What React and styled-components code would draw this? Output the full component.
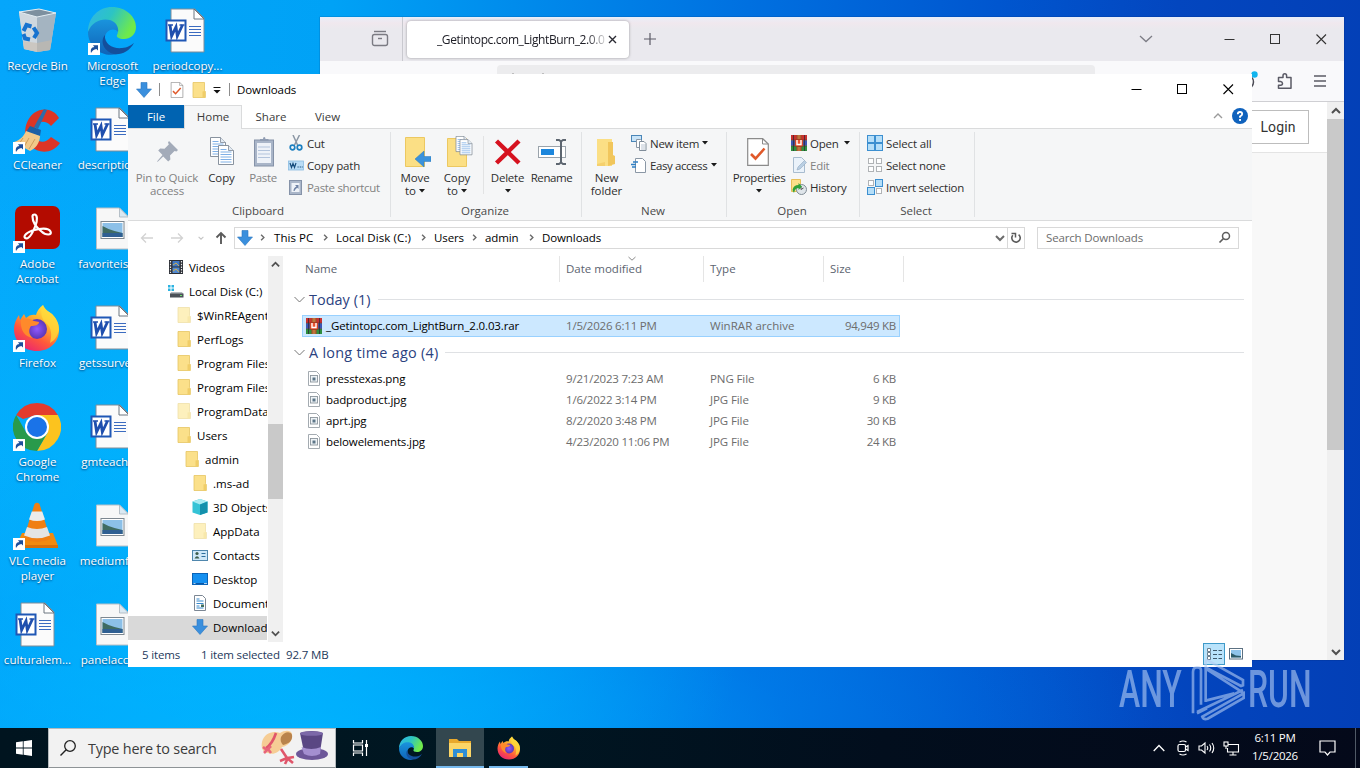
import React from "react";
import styled, { createGlobalStyle } from "styled-components";

const ui = `"Open Sans", "Noto Sans", sans-serif`;

const Global = createGlobalStyle`
  * { box-sizing: border-box; }
  body { margin: 0; overflow: hidden; font-family: ${ui}; font-size: 11.5px; color: #000; }
  svg { display: block; flex: none; }
`;

const Screen = styled.div`
  position: relative;
  width: 1360px;
  height: 768px;
  overflow: hidden;
  display: flex;
  flex-direction: column;
  background:
    radial-gradient(ellipse 520px 500px at 230px 560px, rgba(0, 186, 255, 0.75), rgba(0, 180, 255, 0) 100%),
    radial-gradient(ellipse 900px 300px at 300px 740px, rgba(0, 172, 255, 0.85), rgba(0, 140, 245, 0.4) 55%, rgba(0, 110, 230, 0) 100%),
    linear-gradient(92deg, #05a6fb 0%, #00a2f6 24%, #008cec 37%, #0070e0 54%, #0056cf 72%, #0346bf 85%, #033fb6 100%);
`;

const T = styled.span`
  white-space: nowrap;
  letter-spacing: ${(p) => p.$ls || 0}px;
`;

/* ---------- Desktop ---------- */
const Desktop = styled.div`
  flex: 1;
  min-height: 0;
  display: grid;
  grid-auto-flow: column;
  grid-template-rows: repeat(7, 99px);
  grid-auto-columns: 75px;
  padding-top: 7px;
  margin-left: -1px;
`;
const DeskItem = styled.div`
  display: flex;
  flex-direction: column;
  align-items: center;
`;
const DeskLabel = styled.div`
  margin-top: 3px;
  padding-left: 2px;
  white-space: pre;
  text-align: center;
  color: #fff;
  font-size: 11.6px;
  line-height: 15px;
  text-shadow: 0 1px 2px rgba(0, 30, 80, 0.8);
`;

const Shortcut = () => (
  <g>
    <rect x="0" y="36" width="12" height="12" fill="#fff" />
    <path d="M3 46c-.6-3.600.3-5.600 3.400-6l-1.500-1.800H10v5.200l-1.600-1.500C5.800 42.300 4.300 43.500 3 46z" fill="#1d4f9c" />
  </g>
);
const D = ({ children }) => (
  <svg width="48" height="48" viewBox="0 0 48 48">{children}</svg>
);
const RecycleIcon = () => (
  <D>
    <path d="M6 5l20-3 17 4-6 37-13 2-13-3z" fill="#b9c9d6" />
    <path d="M6 5l18 5 1 35-14-3z" fill="#cfd8df" />
    <path d="M24 10l19-4-6 37-13 2z" fill="#a4b4c1" />
    <path d="M6 5l20-3 17 4-19 4z" fill="#7d909f" stroke="#e3edf3" strokeWidth="1" />
    <path d="M10 34l14 2 15-3-2 10-13 2-13-3z" fill="#c9b9a8" opacity=".55" />
    <g fill="none" stroke="#1773cf" strokeWidth="4">
      <path d="M10.500 24l3-6 5 1.500" /><path d="M20.500 20.500l3.500 5.500-3 5" /><path d="M17 32.500l-5-1-1.500-4.500" />
    </g>
  </D>
);
const EdgeArt = ({ size }) => (
  <svg width={size} height={size} viewBox="0 0 48 48">
    <defs>
      <linearGradient id="eg1" x1="0" y1="0" x2="1" y2=".4"><stop offset="0" stopColor="#2fb4ea" /><stop offset=".5" stopColor="#2cc4c4" /><stop offset="1" stopColor="#6fea4b" /></linearGradient>
      <linearGradient id="eg2" x1="0" y1="0" x2="0" y2="1"><stop offset="0" stopColor="#1a94dd" /><stop offset="1" stopColor="#0f63b8" /></linearGradient>
    </defs>
    <path d="M0 25C0 10 11 0 24 0c14 0 24 10 24 20 0 8-6 12-12 12-5 0-8-2-7-4 2-3 1-9-5-11C15 14 5 16 0 25z" fill="url(#eg1)" />
    <path d="M0 25C4 14 14 11 22 13c6 2 9 7 8 12-4-5-12-2-13 5-1 8 5 15 12 17C14 51 0 40 0 25z" fill="url(#eg2)" />
    <path d="M17 28c-1 9 8 14 17 13 5 0 9-3 12-5-5 9-13 12-20 11-9-2-15-12-9-19z" fill="#144f9c" />
  </svg>
);
const EdgeIcon = () => (
  <D>
    <EdgeArt size={48} />
    <Shortcut />
  </D>
);
const WordIcon = () => (
  <D>
    <path d="M8 2h24l9 9v34H8z" fill="#fbfbfb" stroke="#7f8c99" strokeWidth="1" />
    <path d="M31 2v10h10z" fill="#fff" stroke="#6d7780" strokeWidth="1" />
    <path d="M26 19.500h12M26 22.500h12M26 25.500h12M26 28.500h12" stroke="#3b6bc0" />
    <rect x="3.500" y="13.500" width="19" height="20" fill="#fff" stroke="#1f57b5" strokeWidth="2" />
    <path d="M7 18l1.600 11L13 20l1.300 9L19.500 18" fill="none" stroke="#1f4fae" strokeWidth="2.800" />
    <path d="M5 18h5M16.500 18h5" stroke="#1f4fae" strokeWidth="1.500" />
  </D>
);
const PictureIcon = () => (
  <D>
    <g transform="translate(-1.500 0)">
      <path d="M10 3h23l9 9v32H10z" fill="#f7f7f7" stroke="#b8bfc6" strokeWidth="1" />
      <path d="M33 3v9h9z" fill="#dbe9f2" stroke="#a8b4bd" strokeWidth=".8" />
      <rect x="14.500" y="16.500" width="23" height="17" fill="#fff" stroke="#7d8790" />
      <rect x="16" y="18" width="20" height="14" fill="#8cc0e8" />
      <path d="M16 21l6 3 6 2 8 2v4H16z" fill="#3f6b62" />
      <rect x="16" y="28" width="20" height="4" fill="#2f5f92" />
    </g>
  </D>
);
const CCIcon = () => (
  <D>
    <path d="M46 12L38 20C32 13 22 15 21 25s10 15 17 6l9 6c-7 11-22 11-29 3C9 31 11 15 21 7c9-6 20-4 25 5z" fill="#dc3526" />
    <path d="M31 3l3 1-9 19-4-2z" fill="#2d6cab" />
    <path d="M17 20l11 4-1 6-14-4z" fill="#1b5fa5" />
    <path d="M13 25l14 5c0 7-5 13-10 15L1 36c6-2 10-6 12-11z" fill="#f1c98a" />
    <path d="M10 32l-4 6M16 32l-5 9M22 33l-6 10" stroke="#cf9d5c" strokeWidth="1" />
    <Shortcut />
  </D>
);
const AcrobatIcon = () => (
  <D>
    <rect x="2" y="1" width="45" height="43" rx="7" fill="#b30b00" />
    <path transform="translate(4 1.500)" fill="none" stroke="#fff" strokeWidth="2.200" strokeLinejoin="round" d="M17.500 8c3 0 3 6 1 11-2 6-6 13-9 13-4-1-2-5 6-8 7-2 16-3 18 1 2 4-5 4-9 0-5-4-9-10-9-15 0-1 1-2 2-2z" />
    <Shortcut />
  </D>
);
const FirefoxArt = ({ size }) => (
  <svg width={size} height={size} viewBox="0 0 48 48">
    <defs>
      <linearGradient id="fx1" x1=".8" y1="0" x2=".2" y2="1"><stop offset="0" stopColor="#fff04a" /><stop offset=".35" stopColor="#ffb02e" /><stop offset=".65" stopColor="#ff5a3a" /><stop offset="1" stopColor="#e81e78" /></linearGradient>
      <radialGradient id="fx2"><stop offset="0" stopColor="#9059ff" /><stop offset="1" stopColor="#5b36b5" /></radialGradient>
    </defs>
    <path d="M30 1c2 5 5 6 9 9 5 5 7 10 7 16 0 12-9 21-22 21S1 38 1 25c0-5 2-10 5-14l1 5 4-6 2 4c3-3 7-4 10-3 1-4 3-7 7-10z" fill="url(#fx1)" />
    <circle cx="24" cy="25" r="10" fill="url(#fx2)" />
    <path d="M8 16c5-3 9-1 13 1l5 1c0 3-4 4-8 4-3 4-2 9 2 12-9-1-13-9-12-18z" fill="#ff8a2b" />
    <path d="M30 1c2 5 5 6 9 9 5 5 7 10 7 16-2 7-4 10-9 13 2-8 2-15-4-20-5-4-6-12-3-18z" fill="#ffd93b" opacity=".75" />
  </svg>
);
const FirefoxIcon = () => (
  <D>
    <FirefoxArt size={48} />
    <Shortcut />
  </D>
);
const ChromeIcon = () => (
  <D>
    <path d="M24 0a24 24 0 0 1 20.800 12H24L10 16 3.200 12A24 24 0 0 1 24 0z" fill="#e33b2e" />
    <path d="M44.800 12A24 24 0 0 1 24 48l10.400-18L35 20l-11-8z" fill="#fcc31e" />
    <path d="M3.200 12A24 24 0 0 0 24 48l10.400-18-9 4-12-4z" fill="#299a4b" />
    <circle cx="24" cy="24" r="12" fill="#fff" />
    <circle cx="24" cy="24" r="10" fill="#1a73e8" />
    <Shortcut />
  </D>
);
const VlcIcon = () => (
  <D>
    <path d="M9 31h31l5 13H3z" fill="#f18a10" />
    <path d="M3 43h42v3H3z" fill="#d8700a" />
    <path d="M21.500 2q2.500-2.500 5 0l11 35q-13 6-27 0z" fill="#f07f13" />
    <path d="M18.800 9.500h10.400l2.800 8q-8 3-16 0z" fill="#ececec" />
    <path d="M14 25q10 4 20 0l3 8.500q-13 5.500-26 0z" fill="#e4e4e4" />
    <Shortcut />
  </D>
);

const deskItems = [
  [RecycleIcon, "Recycle Bin"], [CCIcon, "CCleaner"], [AcrobatIcon, "Adobe\nAcrobat"], [FirefoxIcon, "Firefox"],
  [ChromeIcon, "Google\nChrome"], [VlcIcon, "VLC media\nplayer"], [WordIcon, "culturalem..."],
  [EdgeIcon, "Microsoft\nEdge"], [WordIcon, "description..."], [PictureIcon, "favoriteisla..."], [WordIcon, "getssurvey..."],
  [WordIcon, "gmteache..."], [PictureIcon, "mediumfu..."], [PictureIcon, "panelacco..."],
  [WordIcon, "periodcopy..."],
];

/* ---------- Browser window ---------- */
const Browser = styled.div`
  position: absolute;
  left: 320px;
  top: 17px;
  width: 1024px;
  height: 643px;
  background: #f8f8f8;
  display: flex;
  flex-direction: column;
  box-shadow: 0 0 1px rgba(0, 20, 70, 0.7);
`;
const BTabs = styled.div`
  height: 44px;
  flex: none;
  display: flex;
  align-items: center;
  background: linear-gradient(#e9eef9, #f0e8ee 6px, #eae9ee 12px);
`;
const BView = styled.div`
  width: 83px;
  height: 44px;
  padding-left: 51px;
  display: flex;
  align-items: center;
  border-right: 1px solid #c9c9cf;
`;
const BTab = styled.div`
  width: 222px;
  height: 37px;
  margin-left: 4px;
  border-radius: 4px;
  background: #fff;
  box-shadow: 0 0 3px rgba(0, 0, 0, 0.35);
  display: flex;
  align-items: center;
  padding: 0 12px 0 30px;
  justify-content: space-between;
`;
const BTitle = styled.div`
  width: 168px;
  overflow: hidden;
  white-space: nowrap;
  font-size: 12px;
  letter-spacing: -0.4px;
  color: #202028;
  mask-image: linear-gradient(90deg, #000 150px, transparent 172px);
`;
const BSpacer = styled.div`flex: 1;`;
const BBtn = styled.div`
  width: ${(p) => p.$w || 46}px;
  height: 43px;
  display: flex;
  align-items: center;
  justify-content: center;
`;
const BToolbar = styled.div`
  height: 41px;
  flex: none;
  display: flex;
  background: #f9f9fb;
  border-bottom: 1px solid #cfcfd3;
  padding: 4px 15px 0 177px;
`;
const BUrl = styled.div`
  width: 598px;
  height: 32px;
  border-radius: 4px;
  background: #ececee;
`;
const BIcons = styled.div`
  flex: 1;
  display: flex;
  justify-content: flex-end;
  align-items: center;
  gap: 17px;
  padding-bottom: 4px;
`;
const BBody = styled.div`
  flex: 1;
  min-height: 0;
  display: flex;
`;
const BPage = styled.div`flex: 1;`;
const BHeader = styled.div`
  height: 51px;
  background: #fff;
  border-bottom: 1px solid #e4e4e4;
  display: flex;
  justify-content: flex-end;
  padding: 8px 18px 0 0;
`;
const Login = styled.div`
  width: 62px;
  height: 34px;
  border: 1px solid #bdbdbd;
  display: flex;
  align-items: center;
  justify-content: center;
  font-family: Roboto, sans-serif;
  font-size: 14px;
  color: #333;
  letter-spacing: 0.1px;
`;
const BScroll = styled.div`
  width: 17px;
  background: #f0f0f0;
  display: flex;
  flex-direction: column;
  align-items: center;
`;
const ScrollBtn = styled.div`
  height: 17px;
  display: flex;
  align-items: center;
`;
const Thumb = styled.div`
  width: 100%;
  height: ${(p) => p.$h}px;
  margin-top: ${(p) => p.$t || 0}px;
  background: #c9c9c9;
`;

const Chevron = ({ dir = "down", size = 10, color = "#505050", w = 2 }) => {
  const pts = { down: "M1 3l4 4 4-4", up: "M1 7l4-4 4 4", right: "M3 1l4 4-4 4" }[dir];
  return <svg width={size} height={size} viewBox="0 0 10 10"><path d={pts} fill="none" stroke={color} strokeWidth={w} /></svg>;
};
const WinMin = ({ c }) => <svg width="11" height="11"><path d="M.5 5.500h10" stroke={c} /></svg>;
const WinMax = ({ c }) => <svg width="11" height="11"><rect x=".5" y=".5" width="9" height="9" fill="none" stroke={c} /></svg>;
const WinClose = ({ c }) => <svg width="11" height="11"><path d="M.5.5l9.500 9.500M10 .5L.5 10" stroke={c} strokeWidth="1.100" /></svg>;

const BrowserWindow = () => (
  <Browser>
    <BTabs>
      <BView>
        <svg width="18" height="18" viewBox="0 0 18 18" fill="none" stroke="#7b7b83" strokeWidth="1.400">
          <path d="M3 1.500h12" /><rect x="1.500" y="4.500" width="15" height="11" rx="2" /><path d="M7 8.500h4" />
        </svg>
      </BView>
      <BTab>
        <BTitle>_Getintopc.com_LightBurn_2.0.03</BTitle>
        <svg width="9" height="9" viewBox="0 0 9 9"><path d="M1 1l7 7M8 1L1 8" stroke="#2b2b33" strokeWidth="1.400" /></svg>
      </BTab>
      <BBtn $w={41}><svg width="12" height="12"><path d="M6 0v12M0 6h12" stroke="#5b5b66" strokeWidth="1.200" /></svg></BBtn>
      <BSpacer />
      <BBtn $w={40}><svg width="14" height="8"><path d="M1 1l6 5.500L13 1" fill="none" stroke="#7d7d85" strokeWidth="1.300" /></svg></BBtn>
      <BBtn $w={40} />
      <BBtn><WinMin c="#333" /></BBtn><BBtn><WinMax c="#333" /></BBtn><BBtn><WinClose c="#333" /></BBtn>
    </BTabs>
    <BToolbar>
      <BUrl>
        <svg width="70" height="12"><path d="M12 10.500q4-3 8 0M42 10.500q4-3 8 0" fill="none" stroke="#555" /></svg>
      </BUrl>
      <BIcons>
        <svg width="20" height="22" viewBox="0 0 20 22">
          <circle cx="7.500" cy="12" r="7" fill="none" stroke="#4b4b55" strokeWidth="1.500" />
          <circle cx="15.500" cy="4.500" r="3.200" fill="#12b5ee" />
        </svg>
        <svg width="18" height="18" viewBox="0 0 18 18" fill="none" stroke="#5b5b66" strokeWidth="1.500" strokeLinejoin="round">
          <path d="M2.500 5.500h4.500V3.700q0-1.900 1.800-1.900t1.800 1.900v1.800h4.400v10.700h-12.500v-3h2.200q1.800 0 1.800-1.700T4.700 9.500H2.500z" />
        </svg>
        <svg width="18" height="14"><path d="M3 2h12M3 7h12M3 12h12" stroke="#5b5b66" strokeWidth="1.300" /></svg>
      </BIcons>
    </BToolbar>
    <BBody>
      <BPage><BHeader><Login>Login</Login></BHeader></BPage>
      <BScroll>
        <ScrollBtn><Chevron dir="up" /></ScrollBtn>
        <Thumb $h={331} />
        <BSpacer />
        <ScrollBtn><Chevron /></ScrollBtn>
      </BScroll>
    </BBody>
  </Browser>
);

/* ---------- Explorer window ---------- */
const Explorer = styled.div`
  position: absolute;
  left: 128px;
  top: 74px;
  width: 1124px;
  height: 593px;
  background: #fff;
  display: flex;
  flex-direction: column;
`;
const TitleBar = styled.div`
  height: 31px;
  flex: none;
  display: flex;
  align-items: center;
  padding-left: 8px;
`;
const TSep = styled.div`
  width: 1px;
  height: 13px;
  background: #8d8d8d;
  margin: 0 ${(p) => p.$r}px 0 ${(p) => p.$l}px;
`;
const Caption = styled.div`
  margin-left: auto;
  padding-right: 1px;
  display: flex;
`;
const CapBtn = styled.div`
  width: 46px;
  height: 30px;
  display: flex;
  align-items: center;
  justify-content: center;
`;
const TabRow = styled.div`
  height: 24px;
  flex: none;
  display: flex;
  border-bottom: 1px solid #dadbdc;
`;
const RTab = styled.div`
  width: ${(p) => p.$w}px;
  height: ${(p) => (p.$kind === "active" ? 24 : 23)}px;
  display: flex;
  align-items: center;
  justify-content: center;
  padding-bottom: ${(p) => (p.$kind === "active" ? 2 : 0)}px;
  color: ${(p) => (p.$kind === "file" ? "#fff" : "#3b3b3b")};
  background: ${(p) => (p.$kind === "file" ? "#0063b1" : p.$kind === "active" ? "#f5f6f7" : "transparent")};
  border: ${(p) => (p.$kind === "active" ? "1px solid #dadbdc" : "0")};
  border-bottom: 0;
`;
const TabTools = styled.div`
  margin-left: auto;
  display: flex;
  align-items: center;
  gap: 9px;
  padding: 0 4px 2px 0;
`;
const Ribbon = styled.div`
  height: 92px;
  flex: none;
  display: flex;
  background: #f5f6f7;
  border-bottom: 1px solid #dadbdc;
`;
const RGroup = styled.div`
  width: ${(p) => p.$w}px;
  display: flex;
  flex-direction: column;
  border-right: 1px solid #e0e2e4;
  margin: 3px 0 3px;
`;
const RBody = styled.div`
  height: 71px;
  flex: none;
  display: flex;
  padding-left: ${(p) => p.$l || 4}px;
`;
const RCaption = styled.div`
  text-align: center;
  color: #4a4a4a;
  line-height: 15px;
  padding-right: 2px;
`;
const Big = styled.div`
  width: ${(p) => p.$w}px;
  color: ${(p) => (p.$dim ? "#828282" : "#2e2e2e")};
  display: flex;
  flex-direction: column;
  align-items: center;
  padding-top: 4px;
`;
const BigText = styled.div`
  margin-top: 3px;
  display: flex;
  flex-direction: column;
  align-items: center;
  white-space: nowrap;
  line-height: 13px;
  letter-spacing: ${(p) => p.$ls}px;
`;
const BigLine = styled.div`
  height: 13px;
  display: flex;
  align-items: center;
  gap: 3px;
`;
const VSep = styled.div`
  width: 1px;
  height: 58px;
  margin: 4px 3px 0 5px;
  background: #e2e3e4;
`;
const SmallCol = styled.div`
  display: flex;
  flex-direction: column;
  margin-left: ${(p) => p.$l || 4}px;
`;
const Small = styled.div`
  height: 22px;
  display: flex;
  align-items: center;
  gap: 3px;
  white-space: nowrap;
  color: ${(p) => (p.$dim ? "#828282" : "#2e2e2e")};
`;
const ArrowSlot = styled.div`padding-left: ${(p) => p.$l}px;`;
const Caret = () => <svg width="6" height="4"><path d="M0 0h6L3 3.500z" fill="#1a1a1a" /></svg>;

const DownArrow = ({ size = 16 }) => (
  <svg width={size} height={size} viewBox="0 0 16 16">
    <path d="M5 .5h6V7h4.500L8 15.500.5 7H5z" fill="#3a8fdd" stroke="#2b77c0" strokeWidth=".6" />
  </svg>
);
const Folder = ({ light, w = 14, h = 16 }) => (
  <svg width={w} height={h} viewBox="0 0 14 16">
    <path d="M1 .5h11.500v8l.9 1v6H1z" fill={light ? "#fdf0bd" : "#fbe08a"} stroke={light ? "#efe0aa" : "#e6c562"} strokeWidth=".8" />
    <path d="M10.500 15.500V9.500L13 9v6.500z" fill={light ? "#f8e8ab" : "#f0cd68"} />
  </svg>
);
const PropIcon = ({ w, h }) => (
  <svg width={w} height={h} viewBox="0 0 22 28">
    <path d="M.7.700h15L21.300 6v21.300H.7z" fill="#fff" stroke="#8b8b8b" strokeWidth="1.200" />
    <path d="M15.500.700V6h5.800" fill="none" stroke="#8b8b8b" />
    <path d="M4 16l4.500 4.500 9-10" fill="none" stroke="#e0592a" strokeWidth="2.600" />
  </svg>
);
const PinIcon = () => (
  <svg width="32" height="32" viewBox="0 0 32 32">
    <path d="M17 5l9 9-1.500 1.500-2-.4-4.500 4.400.4 4-2.200 2-5-5L6 25.500 5 26l.6-1.200L10.500 19l-4.300-4.500 2-2 4.300.3 4.300-4.300L16 6.500z" fill="#a3abb9" transform="translate(1 0)" />
  </svg>
);
const Doc = ({ x, y }) => (
  <g transform={`translate(${x} ${y})`}>
    <path d="M.5.500h10l5 5v14H.5z" fill="#fff" stroke="#7c8794" strokeWidth=".9" />
    <path d="M10.500.500v5h5" fill="#e3ebf3" stroke="#7c8794" strokeWidth=".8" />
    <path d="M2.500 4.500h6M2.500 7h11M2.500 9.500h11M2.500 12h11M2.500 14.500h11M2.500 17h11" stroke="#7fb0e6" strokeWidth="1" />
  </g>
);
const CopyIcon = () => <svg width="32" height="32" viewBox="0 0 32 32"><Doc x={4} y={1} /><Doc x={12} y={9} /></svg>;
const PasteIcon = () => (
  <svg width="32" height="32" viewBox="0 0 32 32">
    <rect x="7.500" y="4" width="19" height="26" fill="#a9b5c8" stroke="#8592a8" />
    <rect x="10" y="7" width="14" height="20" fill="#eef2f8" />
    <path d="M11 11h12M11 14.500h12M11 18h12M11 21.500h12" stroke="#b3c4dc" />
    <path d="M13 5V3h3q0-2 1.200-2T18.500 3h3v2z" fill="#8f9cb2" />
  </svg>
);
const MoveIcon = () => (
  <svg width="32" height="32" viewBox="0 0 32 32">
    <path d="M6.500 1.500h19v29h-19z" fill="#fbdf85" stroke="#ecc861" />
    <path d="M32 20.500h-7v-5.500l-9 8 9 8v-5.500h7z" fill="#3a92dc" stroke="#2a78bb" strokeWidth=".5" />
  </svg>
);
const CopyToIcon = () => (
  <svg width="32" height="32" viewBox="0 0 32 32">
    <path d="M6.500 2.500h19v28h-19z" fill="#fbdf85" stroke="#ecc861" />
    <g transform="translate(13 0) scale(.8)"><Doc x={2} y={0} /><Doc x={7} y={4} /></g>
  </svg>
);
const DeleteIcon = () => <svg width="32" height="32"><path d="M4.500 5L27 27M27 5L4.500 27" stroke="#d6121f" strokeWidth="4.400" /></svg>;
const RenameIcon = () => (
  <svg width="32" height="32" viewBox="0 0 32 32" fill="none">
    <rect x="2.500" y="10.500" width="27" height="11" fill="#fff" stroke="#9aa3ab" />
    <rect x="5" y="13" width="13" height="6" fill="#1c86dc" />
    <path d="M20 4h3l2 1.500 2-1.500h3M20 28h3l2-1.500 2 1.500h3M25 5v22" stroke="#5d6670" strokeWidth="2" />
  </svg>
);
const NewFolderIcon = () => (
  <svg width="32" height="32" viewBox="0 0 32 32">
    <path d="M6 3h15v27H6z" fill="#fbdf85" />
    <path d="M17 6h5v13l2 1v8l-7 2z" fill="#f1c65c" />
    <path d="M6 28l8-2v4H6z" fill="#f5d06d" />
  </svg>
);
const RarIcon = () => (
  <svg width="16" height="16" viewBox="0 0 16 16">
    <rect width="16" height="5" fill="#c8322f" /><rect y="5.500" width="16" height="5" fill="#3b56b5" /><rect y="11" width="16" height="5" fill="#2f8f3f" />
    <path d="M0 5.300h16M0 10.700h16M2.500 0v16M13.500 0v16" stroke="#2b2433" strokeWidth=".7" />
    <rect x="5.500" width="5" height="16" fill="#a34a24" />
    <path d="M6.500 1h3M6.500 3h3M6.500 13h3M6.500 15h3" stroke="#e9b765" strokeWidth=".8" />
    <rect x="4" y="4.500" width="8" height="7" rx="1" fill="#ea5430" stroke="#8a2c16" strokeWidth=".5" />
    <path d="M6 5v4.500h4V5" fill="none" stroke="#fff" strokeWidth="1.400" />
  </svg>
);
const S = ({ children }) => <svg width="16" height="16" viewBox="0 0 16 16">{children}</svg>;
const CutIcon = () => (
  <S>
    <path d="M5 0l5 11M11.500 0L6 11" stroke="#8b97a5" strokeWidth="1.500" />
    <circle cx="4.500" cy="12.500" r="2.300" fill="none" stroke="#1c7fc0" strokeWidth="1.700" />
    <circle cx="11.500" cy="12.500" r="2.300" fill="none" stroke="#1c7fc0" strokeWidth="1.700" />
  </S>
);
const PathIcon = () => (
  <S>
    <rect x=".5" y="4" width="15" height="9" fill="#b9dcf6" stroke="#8bbce2" strokeWidth=".8" />
    <path d="M2 6l1.500 4.500L5 6.500l1.500 4L8 6M9.500 10h1.200M11.700 10h1.200M13.700 10h1" stroke="#154c7c" fill="none" strokeWidth="1.200" />
  </S>
);
const PasteShortIcon = () => (
  <S>
    <rect x="1.500" y="1.500" width="12" height="14" fill="#aab6c9" stroke="#8592a8" />
    <rect x="3.500" y="4" width="8" height="9" fill="#eef2f8" />
    <path d="M5.500 12q0-3.500 3-4.500L7 6h3.500v4L9.300 8.700Q7.500 9.500 6.500 12z" fill="#6f82a5" />
  </S>
);
const NewItemIcon = () => (
  <S>
    <rect x=".5" y=".5" width="10" height="6" fill="#c9e4f8" stroke="#4a86b8" />
    <path d="M5.500 4.500h4l2 2v6h-6z" fill="#fff" stroke="#8a97a5" /><path d="M8.500 6.500h4.500l2 2v7H8.500z" fill="#fff" stroke="#7f8c99" />
    <path d="M10 10h4M10 12h4M10 14h4" stroke="#a9b8c8" strokeWidth=".8" />
  </S>
);
const EasyIcon = () => (
  <S>
    <path d="M4.500 1.500h7l3 3v11h-10z" fill="#fff" stroke="#8a97a5" />
    <path d="M0 7.500h5M2 5h5M1 10h4" stroke="#2f7fc4" strokeWidth="1.500" />
  </S>
);
const EditIcon = () => (
  <S>
    <path d="M2.500 .5h8l3 3v12h-11z" fill="#eaf2fa" stroke="#a8bccf" />
    <path d="M6 13l1-3 6.500-6.500 2 2L9 12z" fill="#b9cfe3" stroke="#93a9bf" strokeWidth=".6" />
  </S>
);
const HistoryIcon = () => (
  <S>
    <path d="M.5.500h9v12h-9z" fill="#fbe08a" stroke="#e6bf58" />
    <circle cx="10.500" cy="10.500" r="5" fill="#dfe5ea" stroke="#7f8b95" />
    <path d="M10 7.500v3l2.500-1.500" fill="none" stroke="#555" />
    <path d="M1.500 11q1-5 6-5V4l3.500 3.500L7.500 11V9Q4 9 3 14z" fill="#2fa13a" />
  </S>
);
const Quad = ({ on }) => (
  <S>
    {[[0, 0], [8, 0], [0, 8], [8, 8]].map(([x, y], i) => {
      const a = on[i];
      const o = a ? 0.5 : 1.5;
      const d = a ? 7 : 5;
      return <rect key={i} x={x + o} y={y + o} width={d} height={d} fill={a ? "#b5def8" : "#fff"} stroke={a ? "#3c8fd0" : "#b0b3b6"} />;
    })}
  </S>
);

const NavRow = styled.div`
  height: 35px;
  flex: none;
  display: flex;
  align-items: center;
  padding: 0 13px 2px 12px;
`;
const NavIcons = styled.div`
  width: 94px;
  display: flex;
  align-items: center;
`;
const NavSlot = styled.div`
  width: ${(p) => p.$w}px;
  flex: none;
  display: flex;
`;
const AddressBox = styled.div`
  flex: 1;
  height: 22px;
  border: 1px solid #d9d9d9;
  display: flex;
  align-items: center;
  padding-left: 2px;
`;
const Crumb = styled.div`
  width: ${(p) => p.$w}px;
  white-space: nowrap;
  letter-spacing: ${(p) => p.$ls || -0.1}px;
`;
const CrumbArrow = styled.div`
  width: 22px;
  display: flex;
  justify-content: center;
`;
const Refresh = styled.div`
  width: 17px;
  height: 20px;
  border-left: 1px solid #d9d9d9;
  display: flex;
  align-items: center;
  justify-content: center;
`;
const DropSlot = styled.div`
  margin-left: auto;
  padding-right: 2px;
`;
const SearchBox = styled.div`
  width: 202px;
  height: 22px;
  margin-left: 12px;
  border: 1px solid #d9d9d9;
  display: flex;
  align-items: center;
  justify-content: space-between;
  padding: 0 7px 0 8px;
  color: #6d6d6d;
`;

const Main = styled.div`
  height: 386px;
  flex: none;
  display: flex;
`;
const Tree = styled.div`
  width: 139px;
  overflow: hidden;
`;
const TreeRow = styled.div`
  height: 24px;
  display: flex;
  align-items: center;
  padding: 0 0 2px ${(p) => p.$l}px;
  background: ${(p) => (p.$sel ? "#d9d9d9" : "transparent")};
  white-space: nowrap;
`;
const TreeIcon = styled.div`
  width: ${(p) => p.$w || 21}px;
  flex: none;
  display: flex;
`;
const TreeScroll = styled.div`
  width: 15px;
  margin: 0 1px;
  background: #f0f0f0;
  display: flex;
  flex-direction: column;
  align-items: center;
`;
const Files = styled.div`
  flex: 1;
  padding: 0 8px 0 8px;
`;
const Cols = styled.div`
  height: 26px;
  display: flex;
  color: #5c6470;
`;
const Col = styled.div`
  width: ${(p) => p.$w}px;
  padding-left: ${(p) => p.$l}px;
  border-right: 1px solid #e5e5e5;
  line-height: 26px;
  position: relative;
`;
const SortMark = styled.div`
  position: absolute;
  top: 0;
  left: 68px;
`;
const GroupRow = styled.div`
  height: ${(p) => p.$h}px;
  display: flex;
  align-items: center;
  gap: 4px;
  padding: ${(p) => p.$t || 0}px 0 0 2px;
  color: #2b427f;
  font-size: 14.400px;
  white-space: nowrap;
`;
const Rule = styled.div`
  flex: 1;
  height: 1px;
  background: #dfe1e4;
  margin-left: 3px;
`;
const FileRow = styled.div`
  width: 598px;
  height: ${(p) => (p.$sel ? 22 : 21)}px;
  margin-left: 10px;
  padding-bottom: ${(p) => (p.$sel ? 1 : 0)}px;
  border: 1px solid ${(p) => (p.$sel ? "#99d1ff" : "transparent")};
  background: ${(p) => (p.$sel ? "#cce8ff" : "transparent")};
  display: flex;
  align-items: center;
  white-space: nowrap;
`;
const Cell = styled.div`
  width: ${(p) => p.$w}px;
  display: flex;
  align-items: center;
  justify-content: ${(p) => (p.$right ? "flex-end" : "flex-start")};
  gap: 4px;
  color: ${(p) => (p.$main ? "#000" : "#6d6d6d")};
  letter-spacing: ${(p) => p.$ls || 0}px;
`;
const FIcon = styled.div`
  width: 17px;
  margin-left: 2px;
  display: flex;
  justify-content: center;
`;
const ImgFile = () => (
  <svg width="12" height="15" viewBox="0 0 12 15">
    <path d="M.5.500h8l3 3v11H.5z" fill="#fff" stroke="#9aa1a8" strokeWidth=".9" />
    <rect x="2.500" y="4.500" width="7" height="6.500" fill="#eef3f6" stroke="#8b949c" strokeWidth=".9" />
    <rect x="4.500" y="6.500" width="3" height="3" fill="#5d7688" />
  </svg>
);
const Status = styled.div`
  flex: 1;
  display: flex;
  align-items: center;
  padding: 0 8px 0 14px;
  color: #1e395b;
`;
const StatusItem = styled.div`
  width: ${(p) => p.$w}px;
  white-space: nowrap;
  letter-spacing: -0.15px;
`;
const ViewBtns = styled.div`
  margin-left: auto;
  display: flex;
  align-items: center;
  gap: 4px;
  padding: 0 1px 2px 0;
`;
const ViewOn = styled.div`
  width: 22px;
  height: 22px;
  background: #b9e3fb;
  border: 1px solid #3f9ac9;
  display: flex;
  align-items: center;
  justify-content: center;
`;

const VideoIcon = () => (
  <S>
    <rect x="1" y="1" width="14" height="14" fill="#2c2f36" />
    <path d="M2.500 2v12M13.500 2v12" stroke="#e8e8e8" strokeWidth="1.200" strokeDasharray="1.500 1.200" />
    <rect x="4.500" y="2" width="7" height="5.500" fill="#3f78c6" /><rect x="4.500" y="8.500" width="7" height="5.500" fill="#5289cf" />
    <path d="M5 6l3-2 3 3M5 12l3-2 3 3" stroke="#cfae52" fill="none" />
  </S>
);
const DiskIcon = () => (
  <S>
    <path d="M0 2h2.500v2.500H0zM3.500 2H6v2.500H3.500zM0 5.500h2.500V8H0zM3.500 5.500H6V8H3.500z" fill="#2bb3e2" />
    <path d="M3 9h11l1.500 2.500H2z" fill="#b5babf" /><rect x="2" y="10.500" width="13.500" height="4" fill="#4b5158" /><rect x="12" y="12" width="2" height="1" fill="#6de06d" />
  </S>
);
const CubeIcon = () => (
  <S>
    <path d="M8 0l7.500 2.500v11L8 16 .5 13.500v-11z" fill="#35c3d6" /><path d="M8 0l7.500 2.500L8 5.500.5 2.500z" fill="#a9ebf2" /><path d="M8 5.500l7.500-3v11L8 16z" fill="#1490ac" />
  </S>
);
const ContactIcon = () => (
  <S>
    <rect x=".5" y="3.500" width="15" height="10" fill="#cfe8f9" stroke="#4f87ad" /><circle cx="5" cy="6.500" r="1.600" fill="#3b5d4c" /><path d="M2.500 11.500q2.500-4.500 5 0z" fill="#3b5d4c" /><path d="M9.500 6.500h4M9.500 9.500h4" stroke="#2e6f9c" />
  </S>
);
const DesktopIcon = () => (
  <S><rect x=".5" y="2.500" width="15" height="11" fill="#1590f0" stroke="#0a63b8" /><path d="M1 12.500h14" stroke="#0a58a8" /><path d="M1.500 12.500h2M12 12.500h3" stroke="#d9efff" strokeWidth=".8" /></S>
);
const DocsIcon = () => (
  <S><path d="M2.500.500h8l3 3v12h-11z" fill="#fff" stroke="#7c8794" /><path d="M4.500 4h3M4.500 6h7M4.500 8.500h7M4.500 11h3M4.500 13h7" stroke="#3889cc" strokeWidth="1.100" /><rect x="9" y="9.500" width="3" height="2.500" fill="#426f5d" /></S>
);

const tree = [
  [40, VideoIcon, "Videos"], [40, DiskIcon, "Local Disk (C:)"],
  [49, "light", "$WinREAgent", 20], [49, "folder", "PerfLogs", 20], [49, "folder", "Program Files", 20], [49, "folder", "Program Files", 20],
  [49, "light", "ProgramData", 20], [49, "folder", "Users", 20], [57, "folder", "admin", 20], [65, "folder", ".ms-ad", 20],
  [64, CubeIcon, "3D Objects"], [65, "light", "AppData", 20], [64, ContactIcon, "Contacts"], [64, DesktopIcon, "Desktop"],
  [64, DocsIcon, "Documents"], [64, DownArrow, "Downloads"],
];
const files = [
  ["presstexas.png", "9/21/2023 7:23 AM", "PNG File", "6 KB"],
  ["badproduct.jpg", "1/6/2022 3:14 PM", "JPG File", "9 KB"],
  ["aprt.jpg", "8/2/2020 3:48 PM", "JPG File", "30 KB"],
  ["belowelements.jpg", "4/23/2020 11:06 PM", "JPG File", "24 KB"],
];
const crumbs = [["This PC", 40, 0.05], ["Local Disk (C:)", 76, 0.1], ["Users", 29], ["admin", 35]];

const BigBtn = ({ w, icon, lines, dim, caret, ls = -0.1 }) => (
  <Big $w={w} $dim={dim}>
    {icon}
    <BigText $ls={ls}>
      {lines.map((l, i) => (
        <BigLine key={i}>{l && <span>{l}</span>}{caret && i === lines.length - 1 && <Caret />}</BigLine>
      ))}
    </BigText>
  </Big>
);
const SmallBtn = ({ icon, text, dim, caret, ls = -0.25 }) => (
  <Small $dim={dim}>{icon}<T $ls={ls}>{text}</T>{caret !== undefined && <ArrowSlot $l={caret}><Caret /></ArrowSlot>}</Small>
);
const FileLine = ({ row, sel, icon }) => (
  <FileRow $sel={sel}>
    <Cell $w={263} $main><FIcon>{icon}</FIcon><T $ls={-0.12}>{row[0]}</T></Cell>
    <Cell $w={144} $ls={-0.2}>{row[1]}</Cell>
    <Cell $w={110} $ls={sel ? 0.05 : -0.1}>{row[2]}</Cell>
    <Cell $w={76} $right $ls={-0.25}>{row[3]}</Cell>
  </FileRow>
);
const Fold = () => <svg width="11" height="7"><path d="M.5 1l5 5 5-5" fill="none" stroke="#777" /></svg>;

const ExplorerWindow = () => (
  <Explorer>
    <TitleBar>
      <DownArrow />
      <TSep $l={7} $r={10} />
      <PropIcon w={14} h={16} />
      <NavSlot $w={8} />
      <Folder />
      <NavSlot $w={7} />
      <svg width="8" height="8"><path d="M.5 1.500h7" stroke="#111" /><path d="M.5 4h7L4 7.500z" fill="#111" /></svg>
      <TSep $l={8} $r={7} />
      <T $ls={-0.08}>Downloads</T>
      <Caption>
        <CapBtn><WinMin c="#000" /></CapBtn><CapBtn><WinMax c="#000" /></CapBtn><CapBtn><WinClose c="#000" /></CapBtn>
      </Caption>
    </TitleBar>
    <TabRow>
      <RTab $w={56} $kind="file">File</RTab>
      <RTab $w={58} $kind="active">Home</RTab>
      <RTab $w={58}>Share</RTab>
      <RTab $w={55}>View</RTab>
      <TabTools>
        <Chevron dir="up" color="#9b9b9b" w={1.4} />
        <svg width="16" height="16"><circle cx="8" cy="8" r="8" fill="#0f62bd" /><path d="M5.800 6.200q0-2.200 2.200-2.200t2.200 2Q10.200 7.300 8 8.500v1.200" fill="none" stroke="#fff" strokeWidth="1.800" /><rect x="7.100" y="11" width="1.900" height="1.900" fill="#fff" /></svg>
      </TabTools>
    </TabRow>
    <Ribbon>
      <RGroup $w={263}>
        <RBody $l={5}>
          <BigBtn w={68} icon={<PinIcon />} lines={["Pin to Quick", "access"]} dim ls={-0.15} />
          <BigBtn w={41} icon={<CopyIcon />} lines={["Copy"]} />
          <BigBtn w={42} icon={<PasteIcon />} lines={["Paste"]} dim ls={-0.35} />
          <SmallCol>
            <SmallBtn icon={<CutIcon />} text="Cut" />
            <SmallBtn icon={<PathIcon />} text="Copy path" ls={-0.15} />
            <SmallBtn icon={<PasteShortIcon />} text="Paste shortcut" dim ls={-0.32} />
          </SmallCol>
        </RBody>
        <RCaption>Clipboard</RCaption>
      </RGroup>
      <RGroup $w={191}>
        <RBody $l={3}>
          <BigBtn w={42} icon={<MoveIcon />} lines={["Move", "to"]} caret />
          <BigBtn w={42} icon={<CopyToIcon />} lines={["Copy", "to"]} caret />
          <VSep />
          <BigBtn w={41} icon={<DeleteIcon />} lines={["Delete", ""]} caret ls={-0.2} />
          <BigBtn w={47} icon={<RenameIcon />} lines={["Rename"]} ls={-0.4} />
        </RBody>
        <RCaption>Organize</RCaption>
      </RGroup>
      <RGroup $w={145}>
        <RBody>
          <BigBtn w={41} icon={<NewFolderIcon />} lines={["New", "folder"]} />
          <SmallCol>
            <SmallBtn icon={<NewItemIcon />} text="New item" caret={0} />
            <SmallBtn icon={<EasyIcon />} text="Easy access" caret={1} ls={-0.42} />
          </SmallCol>
        </RBody>
        <RCaption>New</RCaption>
      </RGroup>
      <RGroup $w={133}>
        <RBody>
          <BigBtn w={56} icon={<svg width="32" height="32"><g transform="translate(4 2)"><PropIcon w={22} h={28} /></g></svg>} lines={["Properties", ""]} caret ls={-0.3} />
          <SmallCol>
            <SmallBtn icon={<RarIcon />} text="Open" caret={2} />
            <SmallBtn icon={<EditIcon />} text="Edit" dim />
            <SmallBtn icon={<HistoryIcon />} text="History" />
          </SmallCol>
        </RBody>
        <RCaption>Open</RCaption>
      </RGroup>
      <RGroup $w={115}>
        <RBody>
          <SmallCol $l={3}>
            <SmallBtn icon={<Quad on={[1, 1, 1, 1]} />} text="Select all" ls={-0.15} />
            <SmallBtn icon={<Quad on={[0, 0, 0, 0]} />} text="Select none" />
            <SmallBtn icon={<Quad on={[0, 1, 1, 0]} />} text="Invert selection" />
          </SmallCol>
        </RBody>
        <RCaption>Select</RCaption>
      </RGroup>
    </Ribbon>
    <NavRow>
      <NavIcons>
        <NavSlot $w={30}><svg width="14" height="12"><path d="M1.500 6H13M6 1.500L1.500 6 6 10.500" fill="none" stroke="#d2d2d2" strokeWidth="1.300" /></svg></NavSlot>
        <NavSlot $w={28}><svg width="14" height="12"><path d="M1 6h11.500M8 1.500L12.500 6 8 10.500" fill="none" stroke="#d2d2d2" strokeWidth="1.300" /></svg></NavSlot>
        <NavSlot $w={17}><Chevron size={6} color="#c5c5c5" w={1.8} /></NavSlot>
        <NavSlot $w={19}><svg width="12" height="13"><path d="M6 13V2M1.500 6.500L6 2l4.500 4.500" fill="none" stroke="#5b5b5b" strokeWidth="1.900" /></svg></NavSlot>
      </NavIcons>
      <AddressBox>
        <DownArrow />
        <NavSlot $w={6} />
        <NavSlot $w={15}><Chevron dir="right" size={7} color="#6b6b6b" /></NavSlot>
        {crumbs.map(([n, w, ls]) => (
          <React.Fragment key={n}>
            <Crumb $w={w} $ls={ls}>{n}</Crumb>
            <CrumbArrow><Chevron dir="right" size={7} color="#6b6b6b" /></CrumbArrow>
          </React.Fragment>
        ))}
        <Crumb $w={60}>Downloads</Crumb>
        <DropSlot><Chevron color="#6b6b6b" /></DropSlot>
        <Refresh>
          <svg width="12" height="12" viewBox="0 0 12 12"><path d="M8.600 2.600a4.200 4.200 0 1 1-5.800.6" fill="none" stroke="#5b5b5b" strokeWidth="1.600" /><path d="M1.500 1.500h4v4" fill="none" stroke="#5b5b5b" strokeWidth="1.500" /></svg>
        </Refresh>
      </AddressBox>
      <SearchBox>
        <T $ls={-0.15}>Search Downloads</T>
        <svg width="13" height="13"><circle cx="8" cy="5" r="3.500" fill="none" stroke="#5d5d5d" strokeWidth="1.500" /><path d="M5.500 7.500L1.500 11.500" stroke="#5d5d5d" strokeWidth="1.700" /></svg>
      </SearchBox>
    </NavRow>
    <Main>
      <Tree>
        {tree.map(([l, I, name, w], i) => (
          <TreeRow key={i} $l={l} $sel={i === tree.length - 1}>
            <TreeIcon $w={w}>{typeof I === "string" ? <Folder light={I === "light"} /> : <I />}</TreeIcon>
            <T>{name}</T>
          </TreeRow>
        ))}
      </Tree>
      <TreeScroll>
        <ScrollBtn><Chevron dir="up" size={9} /></ScrollBtn>
        <Thumb $h={75} $t={151} />
        <BSpacer />
        <ScrollBtn><Chevron size={9} /></ScrollBtn>
      </TreeScroll>
      <Files>
        <Cols>
          <Col $w={268} $l={13}>Name</Col>
          <Col $w={144} $l={6}>Date modified<SortMark><svg width="8" height="5"><path d="M.5 1L4 4.200 7.500 1" fill="none" stroke="#8a8a8a" /></svg></SortMark></Col>
          <Col $w={120} $l={6}>Type</Col>
          <Col $w={80} $l={6}>Size</Col>
        </Cols>
        <GroupRow $h={33} $t={2}><Fold /><T $ls={0.05}>Today (1)</T><Rule /></GroupRow>
        <FileLine sel icon={<RarIcon />} row={["_Getintopc.com_LightBurn_2.0.03.rar", "1/5/2026 6:11 PM", "WinRAR archive", "94,949 KB"]} />
        <GroupRow $h={31}><Fold /><T $ls={0.27}>A long time ago (4)</T><Rule /></GroupRow>
        {files.map((f) => <FileLine key={f[0]} row={f} icon={<ImgFile />} />)}
      </Files>
    </Main>
    <Status>
      <StatusItem $w={59}>5 items</StatusItem>
      <StatusItem $w={85}>1 item selected</StatusItem>
      <StatusItem $w={50}>92.7 MB</StatusItem>
      <ViewBtns>
        <ViewOn>
          <svg width="16" height="14"><path d="M1.500 1.500h3v3h-3zM1.500 5.500h3v3h-3zM1.500 9.500h3v3h-3z" fill="#fff" stroke="#6a7f8e" /><path d="M7 3.500h4M12.500 3.500H16M7 7.500h4M12.500 7.500H16M7 11.500h4M12.500 11.500H16" stroke="#3f5a6c" /></svg>
        </ViewOn>
        <svg width="14" height="12"><rect x=".5" y=".5" width="13" height="10.500" fill="#fff" stroke="#5c7182" /><rect x="2" y="2" width="10" height="7.500" fill="#8fc3ea" /><path d="M2 5l5 2.500 5 .5v1.500H2z" fill="#2d5a68" /></svg>
      </ViewBtns>
    </Status>
  </Explorer>
);

/* ---------- Watermark ---------- */
const Mark = styled.div`
  position: absolute;
  left: 1119px;
  top: 657px;
  width: 196px;
  height: 66px;
  display: flex;
  align-items: center;
  opacity: 0.6;
`;
const MarkWord = styled.div`
  width: ${(p) => p.$w}px;
  font-family: Roboto, sans-serif;
  font-weight: 500;
  font-size: 51px;
  line-height: 66px;
  color: #b4cdf4;
  white-space: nowrap;
  transform: scaleX(${(p) => p.$k});
  transform-origin: 0 50%;
`;

/* ---------- Taskbar ---------- */
const Taskbar = styled.div`
  height: 40px;
  flex: none;
  display: flex;
  background: linear-gradient(90deg, #00141f, #001722 35%, #020e1d 65%, #04091a);
  color: #fff;
`;
const TBtn = styled.div`
  width: ${(p) => p.$w || 48}px;
  height: 40px;
  display: flex;
  align-items: center;
  justify-content: center;
  background: ${(p) => (p.$active ? "#33474f" : "transparent")};
  box-shadow: ${(p) => (p.$line ? "inset 0 -2px 0 #76b9ed" : "none")};
`;
const Search = styled.div`
  width: 288px;
  height: 40px;
  background: #f2f2f2;
  border: 1px solid #b5babd;
  border-bottom-color: #8e9396;
  display: flex;
  align-items: center;
  padding: 0 4px 0 11px;
  color: #3c3c3c;
`;
const SearchText = styled.div`
  flex: 1;
  padding-left: 12px;
  font-size: 14.400px;
  letter-spacing: -0.2px;
`;
const Tray = styled.div`
  margin-left: auto;
  display: flex;
  align-items: center;
`;
const TraySlot = styled.div`
  width: ${(p) => p.$w}px;
  display: flex;
  justify-content: center;
`;
const Clock = styled.div`
  width: 62px;
  text-align: center;
  font-size: 11.5px;
  line-height: 18px;
  letter-spacing: -0.25px;
  padding-bottom: 2px;
`;
const ShowDesk = styled.div`
  width: 5px;
  height: 40px;
  border-left: 1px solid #505a66;
  margin-left: 7px;
`;

export default function App() {
  return (
    <Screen>
      <Global />
      <Desktop>
        {deskItems.map(([I, label], i) => (
          <DeskItem key={i}><I /><DeskLabel>{label}</DeskLabel></DeskItem>
        ))}
      </Desktop>
      <BrowserWindow />
      <ExplorerWindow />
      <Mark>
        <MarkWord $w={71} $k={0.625}>ANY</MarkWord>
        <svg width="58" height="66" viewBox="297 77 174 198" fill="none" stroke="#b4cdf4" strokeWidth="8">
          <path d="M306 246V122q0-14 12-14t12 8v104M318 246l30-15" />
          <path d="M344 212V92q0-8 8-4l104 58v16l-6 2-106-56M344 112l112 72" />
          <path d="M344 208l86-22M318 242l138-66M334 256l124-70v14L350 262q-12 4-16-6z" />
        </svg>
        <MarkWord $w={62} $k={0.625}>RUN</MarkWord>
      </Mark>
      <Taskbar>
        <TBtn>
          <svg width="16" height="16" viewBox="0 0 16 16" fill="#fff"><path d="M0 2.300L6.800 1.300v6.300H0zM7.600 1.200L16 0v7.600H7.600zM0 8.400h6.800v6.300L0 13.700zM7.600 8.400H16V16l-8.400-1.200z" /></svg>
        </TBtn>
        <Search>
          <svg width="16" height="16"><circle cx="10" cy="6" r="5.300" fill="none" stroke="#222" strokeWidth="1.300" /><path d="M6.200 9.800L.5 15.500" stroke="#222" strokeWidth="1.400" /></svg>
          <SearchText>Type here to search</SearchText>
          <svg width="70" height="36" viewBox="0 0 70 36">
            <path d="M1 12C3 3 12 0 19 3c5-3 11-3 12 1 1 7-4 12-10 13-3 6-9 8-14 6C1 22 0 17 1 12z" fill="#f6cd95" />
            <path d="M20 7c3-6 10-6 11-2 1 6-4 9-9 10-2-2-3-5-2-8z" fill="#b9834c" />
            <path d="M5 18C10 15 13 9 15 3" stroke="#e0556a" strokeWidth="2.600" fill="none" />
            <path d="M2 17l4 3 4-4M3 23l4-4 3 4" stroke="#e8657a" strokeWidth="2.600" fill="none" />
            <path d="M20 19l6 9M19 31l7-3 6 5M24 34l3-6 6-1" stroke="#e0556a" strokeWidth="2.600" fill="none" />
            <ellipse cx="51" cy="24" rx="16" ry="6" fill="#6d5799" />
            <path d="M39 3q12-4 23 0l-3 19q-8 4-16 0z" fill="#5a4783" />
            <path d="M40.500 17q10 4 19.500 0l-1 7q-8 4-16 0z" fill="#a48fd0" />
            <ellipse cx="50.500" cy="3.500" rx="11.500" ry="2.300" fill="#7c68a8" />
          </svg>
        </Search>
        <TBtn>
          <svg width="18" height="16" fill="none" stroke="#fff" strokeWidth="1.200"><path d="M2.500 0v3h9V0M2.500 16v-3h9v3M2.500 5h9v6h-9zM15.500 0v16" /><rect x="14" y="4" width="3" height="3" fill="#fff" stroke="none" /></svg>
        </TBtn>
        <NavSlot $w={3} />
        <TBtn><EdgeArt size={24} /></TBtn>
        <NavSlot $w={1} />
        <TBtn $active $line>
          <svg width="22" height="20" viewBox="0 0 22 20"><path d="M0 1h8l2 2h12v16H0z" fill="#e9a92c" /><path d="M0 5h22v14H0z" fill="#fcd667" /><path d="M4 19v-8h14v8h-4v-4H8v4z" fill="#2f8fd6" /></svg>
        </TBtn>
        <NavSlot $w={5} />
        <TBtn $line $w={39}><FirefoxArt size={24} /></TBtn>
        <Tray>
          <TraySlot $w={24}><svg width="12" height="8"><path d="M.7 7L6 1.500 11.300 7" fill="none" stroke="#fff" strokeWidth="1.300" /></svg></TraySlot>
          <TraySlot $w={24}><svg width="12" height="16" fill="none" stroke="#fff" strokeWidth="1.200"><rect x="1" y="4.500" width="7.500" height="7" rx="1.500" /><path d="M8.500 7l2.500-1.500v5L8.500 9M2.500 2q3.500-2 7 0M2.500 14q3.500 2 7 0" /></svg></TraySlot>
          <TraySlot $w={23}><svg width="17" height="14" fill="none" stroke="#fff" strokeWidth="1.100"><path d="M1 5h2.500L7 2v10L3.500 9H1zM9 5q1.500 2 0 4M11.500 3.500q2.500 3.500 0 7M14 2q3.500 5 0 10" /></svg></TraySlot>
          <TraySlot $w={26}><svg width="17" height="15" fill="none" stroke="#fff" strokeWidth="1.100"><path d="M5 3.500h10.500v7.500H4.500V7M10 11v3M6.500 14h7" /><rect x="1" y="1" width="4" height="4" /><path d="M3 5v3" /></svg></TraySlot>
          <Clock>6:11 PM<br />1/5/2026</Clock>
          <TraySlot $w={42}><svg width="17" height="16" fill="none" stroke="#fff" strokeWidth="1.200"><path d="M1 1h15v11h-5L8.500 15 6 12H1z" /></svg></TraySlot>
          <ShowDesk />
        </Tray>
      </Taskbar>
    </Screen>
  );
}
